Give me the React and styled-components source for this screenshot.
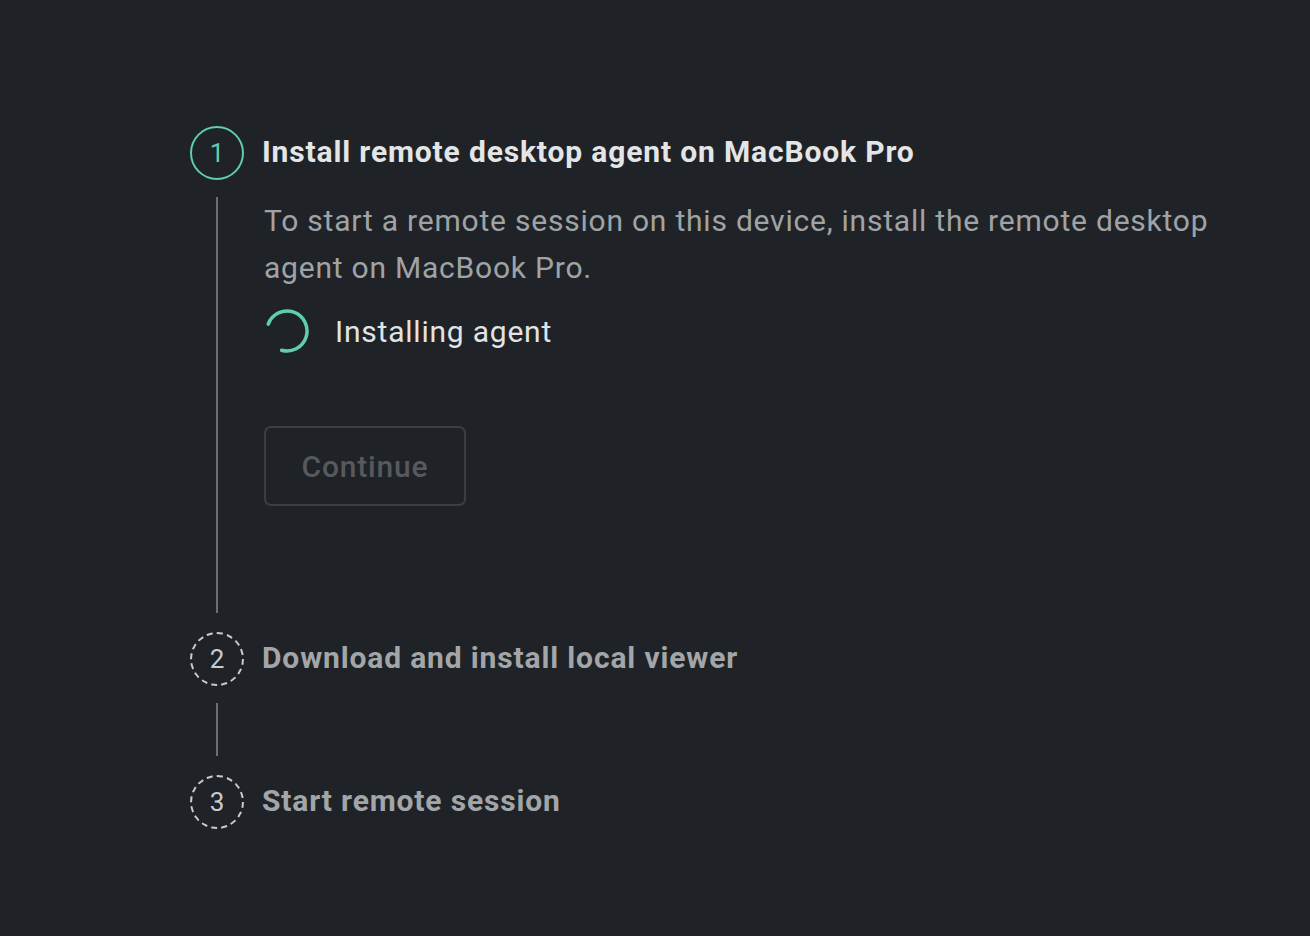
import styled, { createGlobalStyle } from 'styled-components';

const GlobalStyle = createGlobalStyle`
  html, body {
    margin: 0;
    padding: 0;
    background: #1f2327;
  }
  body {
    font-family: Roboto, "Noto Sans", sans-serif;
  }
`;

const Page = styled.div`
  min-height: 936px;
  box-sizing: border-box;
  padding: 126px 0 0 190px;
  background: #1f2327;
`;

const Step = styled.div`
  display: flex;
  flex-direction: column;
`;

const StepHead = styled.div`
  display: flex;
  align-items: center;
  gap: 18px;
`;

const Badge = styled.div`
  width: 54px;
  height: 54px;
  box-sizing: border-box;
  border-radius: 50%;
  border: 2px ${(p) => (p.active ? 'solid #5fcdb0' : 'dashed #c9cbcd')};
  color: ${(p) => (p.active ? '#5fcdb0' : '#c9cbcd')};
  display: flex;
  align-items: center;
  justify-content: center;
  font-size: 26px;
  font-weight: 400;
  flex-shrink: 0;
`;

const Title = styled.h2`
  margin: 0 0 3px;
  font-size: 30px;
  font-weight: 700;
  letter-spacing: 0.85px;
  color: ${(p) => (p.active ? '#e4e5e6' : '#a3a6a9')};
`;

const Connector = styled.div`
  margin: 17px 0 19px 26px;
  border-left: 2px solid #6b6f73;
  padding: 0 0 ${(p) => p.pad || 0}px 46px;
  min-height: ${(p) => p.min || 0}px;
`;

const Text = styled.p`
  margin: 0;
  max-width: 960px;
  font-size: 30px;
  line-height: 47px;
  letter-spacing: 0.78px;
  color: #a0a3a6;
`;

const Status = styled.div`
  display: flex;
  align-items: center;
  gap: 25px;
  margin-top: 17px;
  font-size: 30px;
  letter-spacing: 0.78px;
  color: #e2e3e4;
`;

const Button = styled.button`
  margin-top: 72px;
  width: 202px;
  height: 80px;
  border: 2px solid #3a3e43;
  border-radius: 7px;
  background: transparent;
  color: #56595d;
  font-family: Roboto, sans-serif;
  font-size: 30px;
  font-weight: 500;
  letter-spacing: 0.8px;
`;

function Spinner() {
  return (
    <svg width="46" height="46" viewBox="0 0 46 46">
      <circle
        cx="23"
        cy="23"
        r="20"
        fill="none"
        stroke="#5fcdb0"
        strokeWidth="3.5"
        strokeLinecap="round"
        strokeDasharray="92 200"
        transform="rotate(-160 23 23)"
      />
    </svg>
  );
}

export default function App() {
  return (
    <>
      <GlobalStyle />
      <Page>
        <Step>
          <StepHead>
            <Badge active>1</Badge>
            <Title active>Install remote desktop agent on MacBook Pro</Title>
          </StepHead>
          <Connector pad={107}>
            <Text>
              To start a remote session on this device, install the remote desktop agent on MacBook Pro.
            </Text>
            <Status>
              <Spinner />
              Installing agent
            </Status>
            <Button disabled>Continue</Button>
          </Connector>
        </Step>
        <Step>
          <StepHead>
            <Badge>2</Badge>
            <Title>Download and install local viewer</Title>
          </StepHead>
          <Connector min={53} />
        </Step>
        <Step>
          <StepHead>
            <Badge>3</Badge>
            <Title>Start remote session</Title>
          </StepHead>
        </Step>
      </Page>
    </>
  );
}
